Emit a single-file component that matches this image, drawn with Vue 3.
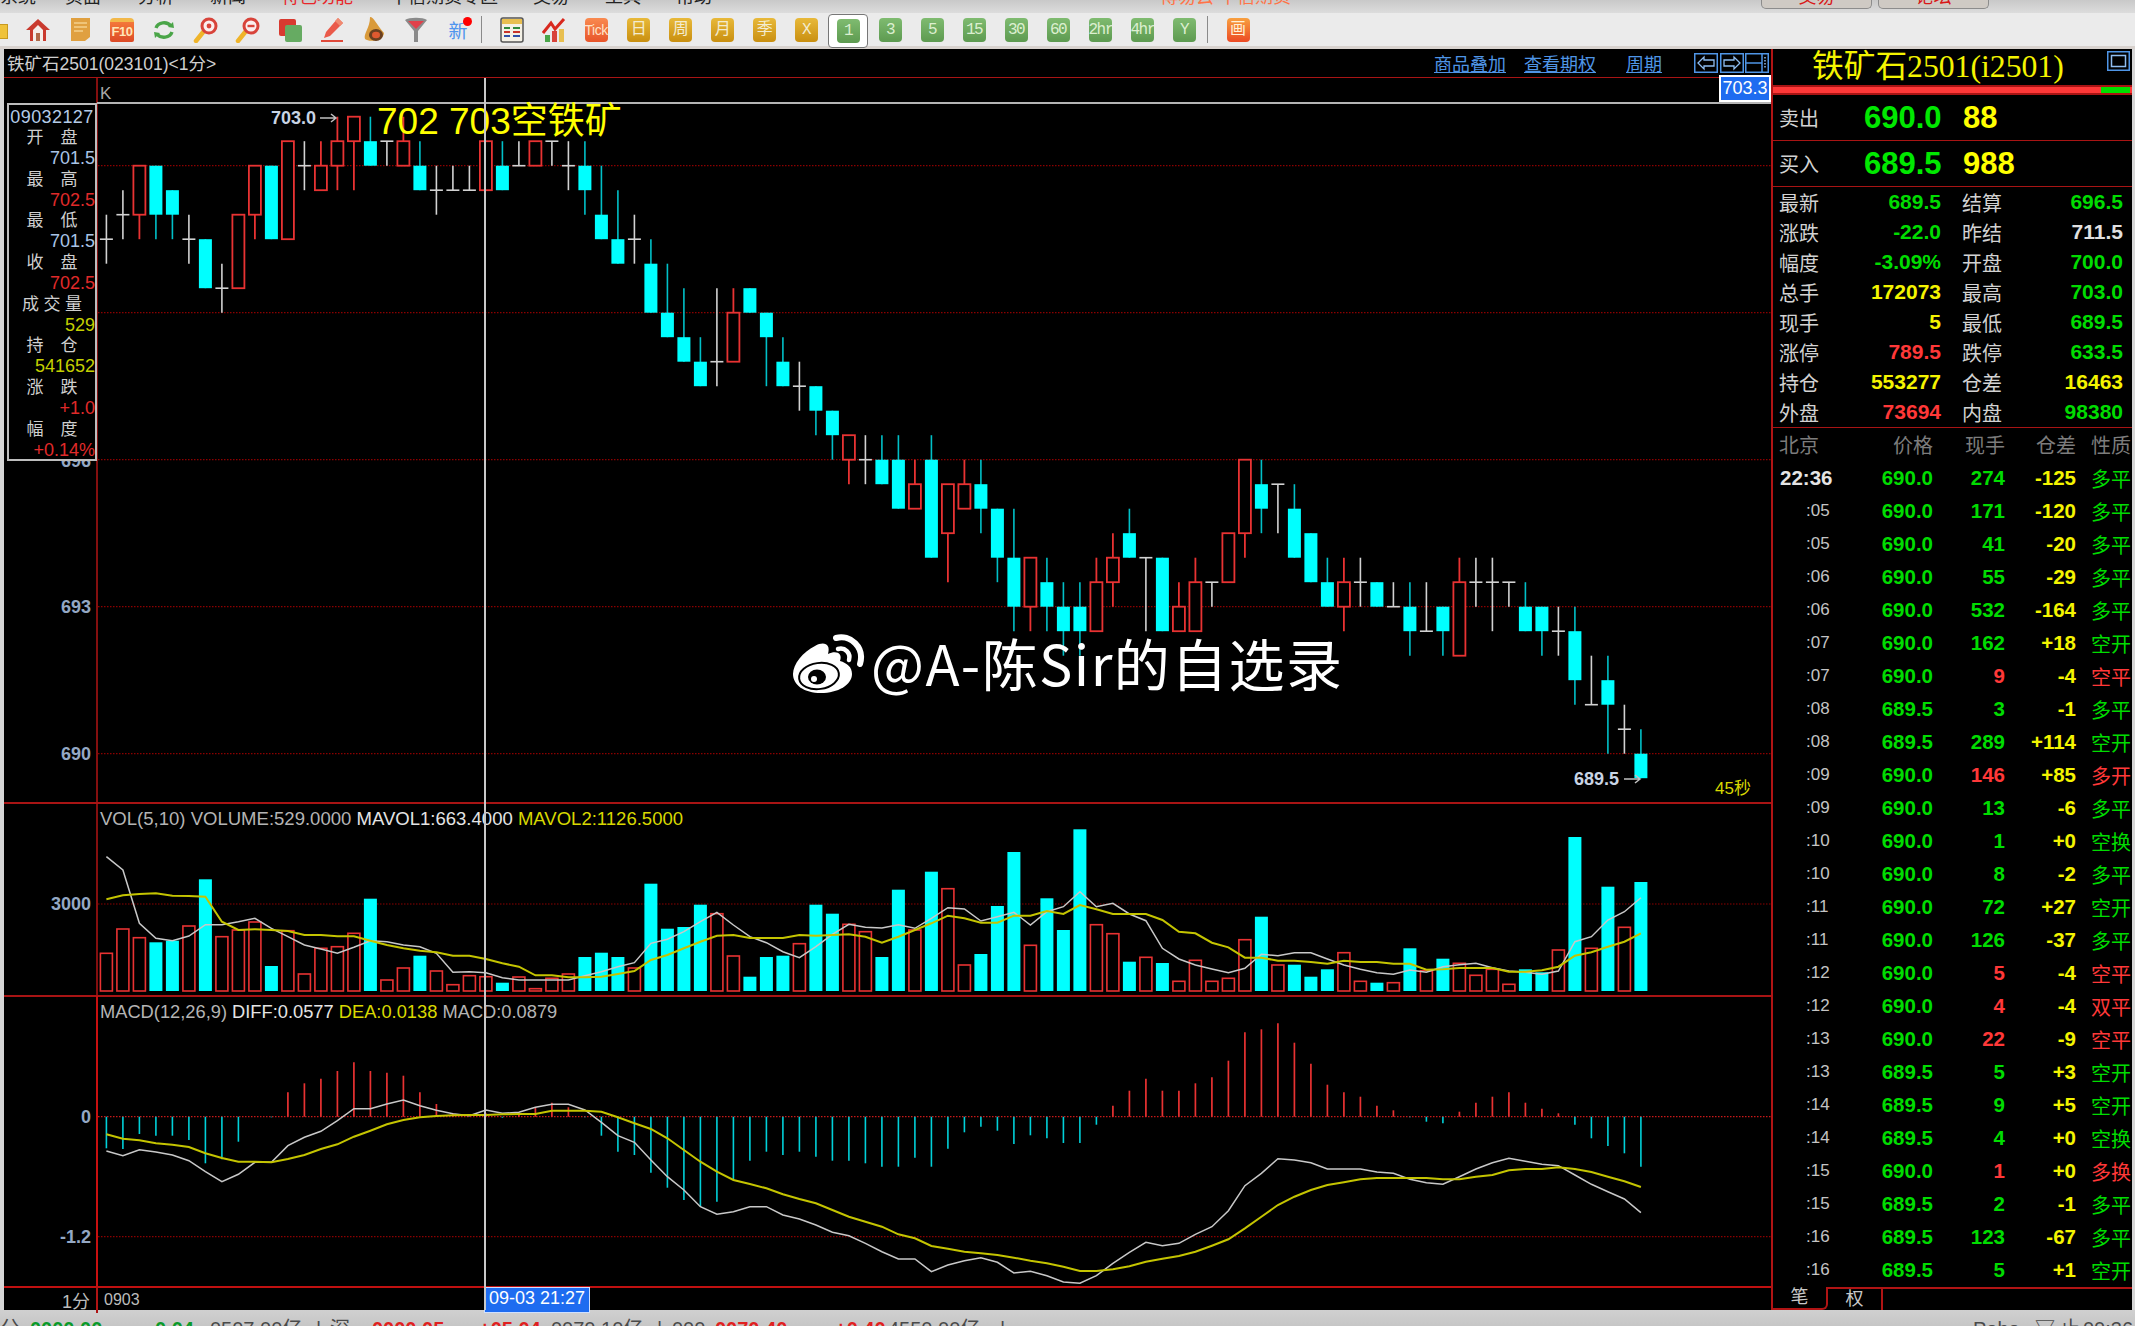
<script setup>
const X0 = 106.4
const STEP = 16.5
const cx = i => +(X0 + STEP * i).toFixed(1)
const py = p => +(753.7 + (690 - p) * 49).toFixed(1)

// type, body top, body bottom, high, low
const raw = [
  ['d',700.5,700.5,701,700],['d',701,701,701.5,700.5],['r',702,701,702,700.5],['c',702,701,702,700.5],
  ['c',701.5,701,701.5,700.5],['d',700.5,700.5,701,700],['c',700.5,699.5,700.5,699.5],['d',699.5,699.5,700,699],
  ['r',701,699.5,701,699.5],['r',702,701,702,700.5],['c',702,700.5,702,700.5],['r',702.5,700.5,702.5,700.5],
  ['d',702,702,702.5,701.5],['r',702,701.5,702.5,701.5],['r',702.5,702,703,701.5],['r',703,702.5,703,701.5],
  ['c',702.5,702,703,702],['d',702.5,702.5,702.5,702],['r',702.5,702,703,702],['c',702,701.5,702.5,701.5],
  ['d',701.5,701.5,702,701],['d',701.5,701.5,702,701.5],['d',701.5,701.5,702,701.5],['r',702.5,701.5,702.5,701.5],
  ['c',702,701.5,702.5,701.5],['d',702,702,702.5,702],['r',702.5,702,702.5,702],['d',702.5,702.5,702.5,702],
  ['d',702,702,702.5,701.5],['c',702,701.5,702.5,701],['c',701,700.5,702,700.5],['c',700.5,700,701.5,700],
  ['d',700.5,700.5,701,700],['c',700,699,700.5,699],['c',699,698.5,700,698.5],['c',698.5,698,699.5,698],
  ['c',698,697.5,698.5,697.5],['d',698,698,699.5,697.5],['r',699,698,699.5,698],['c',699.5,699,699.5,699],
  ['c',699,698.5,699,697.5],['c',698,697.5,698.5,697.5],['d',697.5,697.5,698,697],['c',697.5,697,697.5,696.5],
  ['c',697,696.5,697,696],['r',696.5,696,696.5,695.5],['d',696,696,696.5,695.5],['c',696,695.5,696.5,695.5],
  ['c',696,695,696.5,695],['r',695.5,695,696,695],['c',696,694,696.5,694],['r',695.5,694.5,695.5,693.5],
  ['r',695.5,695,696,695],['c',695.5,695,696,694.5],['c',695,694,695,693.5],['c',694,693,695,692.5],
  ['r',694,693,694,692.5],['c',693.5,693,694,692.5],['c',693,692.5,693.5,692],['c',693,692.5,693.5,692],
  ['r',693.5,692.5,694,692.5],['r',694,693.5,694.5,693],['c',694.5,694,695,694],['d',694,694,694,692.5],
  ['c',694,692.5,694,692.5],['r',693,692.5,693.5,692.5],['r',693.5,692.5,694,692.5],['d',693.5,693.5,693.5,693],
  ['r',694.5,693.5,694.5,693.5],['r',696,694.5,696,694],['c',695.5,695,696,694.5],['d',695.5,695.5,695.5,694.5],
  ['c',695,694,695.5,694],['c',694.5,693.5,694.5,693.5],['c',693.5,693,694,693],['r',693.5,693,694,692.5],
  ['d',693.5,693.5,694,693],['c',693.5,693,693.5,693],['d',693,693,693.5,693],['c',693,692.5,693.5,692],
  ['d',692.5,692.5,693.5,692.5],['c',693,692.5,693,692],['r',693.5,692,694,692],['d',693.5,693.5,694,693],
  ['d',693.5,693.5,694,692.5],['d',693.5,693.5,693.5,693],['c',693,692.5,693.5,692.5],['c',693,692.5,693,692],
  ['d',692.5,692.5,693,692],['c',692.5,691.5,693,691],['d',691,691,692,691],['c',691.5,691,692,690],
  ['d',690.5,690.5,691,690],['c',690,689.5,690.5,689.5]
]
const candles = raw.map((c, i) => ({
  x: cx(i), type: c[0], top: py(c[1]), bottom: py(c[2]), high: py(c[3]), low: py(c[4])
}))

// bar tops, negative = solid cyan bar
const volRaw = [
  490,417,443,-457,-452,408,-268,440,420,396,-528,422,552,475,470,430,-326,570,534,-497,543,584,557,560,
  -578,561,596,565,552,-501,-488,-501,534,-281,-416,-411,-344,371,498,-560,-501,-497,461,-344,-371,403,425,-501,
  -299,420,-245,296,525,-492,-348,-186,466,-325,-420,-118,404,431,-515,502,-519,574,511,574,565,449,-380,525,
  -524,-560,-538,488,574,-578,578,-475,542,-506,520,556,538,583,-538,-547,480,-141,475,-290,412,-276
]
const VOL_BASE = 991
const volY = v => +(790 + v / 3).toFixed(1)
const vols = volRaw.map((v, i) => ({ x: cx(i), y: volY(Math.abs(v)), solid: v < 0 }))

const toPoints = (arr, yFn) => arr.map((v, i) => `${cx(i)},${yFn(v)}`).join(' ')

const mavol1 = toPoints([
  200,240,400,445,452,438,404,404,395,385,415,440,465,477,490,472,452,455,465,470,490,547,545,548,563,570,570,570,570,557,545,530,518,460,448,425,395,367,405,440,458,485,503,470,433,403,412,414,
  404,415,385,353,357,393,380,367,405,365,350,305,350,340,372,392,475,507,525,537,548,535,493,497,488,488,507,525,538,548,553,540,547,530,524,520,533,543,547,553,543,455,440,390,365,323
], volY)
const mavol2 = toPoints([
  328,316,312,310,317,318,320,395,420,418,420,423,435,435,439,439,452,465,475,482,487,497,497,507,520,530,556,556,562,562,560,552,543,510,495,475,455,437,435,444,444,444,435,437,435,433,440,458,
  440,420,400,377,385,398,398,377,377,363,372,345,358,372,372,372,390,425,430,458,472,503,503,512,512,516,521,512,516,516,521,521,539,538,534,534,534,545,545,541,530,497,487,470,455,430
], volY)

const macdY = v => +(1000 + v / 3).toFixed(1)
const histRaw = [
  445,447,402,407,407,420,490,478,425,350,352,277,250,236,213,187,213,218,227,277,312,340,350,340,353,340,322,308,322,352,407,455,465,518,563,600,620,605,540,482,455,465,455,470,482,482,490,500,
  500,473,500,446,397,380,392,432,406,415,429,429,374,317,272,236,272,272,250,232,182,97,88,70,128,191,254,277,290,317,331,352,365,370,335,308,290,277,308,326,340,374,415,438,460,500
]
const hist = histRaw.map((v, i) => ({ x: cx(i), y: macdY(v), up: v < 350 })).filter(h => h.y !== macdY(350))
const diff = toPoints([
  453,467,449,456,465,482,515,545,523,487,487,437,412,394,362,326,326,312,300,317,331,341,347,330,340,337,322,313,313,330,367,407,427,480,530,570,620,643,635,620,620,645,657,675,697,707,730,755,
  777,777,815,795,782,773,787,819,814,827,846,850,827,790,757,727,737,730,703,680,632,557,520,476,480,488,507,507,507,516,520,538,548,553,530,507,488,475,484,493,497,525,553,575,597,638
], macdY)
const dea = toPoints([
  403,416,421,430,434,441,460,474,485,485,487,477,465,447,433,410,392,373,360,352,348,346,345,345,343,342,342,332,332,332,335,352,370,387,415,450,485,515,540,552,565,583,597,610,630,650,665,680,
  703,715,738,746,755,760,765,773,782,790,800,813,813,808,799,785,776,768,755,737,718,685,650,615,590,570,555,547,538,534,534,534,534,538,538,530,525,511,507,507,502,507,516,530,544,561
], macdY)

const menuItems = [
  { t: '系统', w: 65 }, { t: '页面', w: 73 }, { t: '分析', w: 72 }, { t: '新闻', w: 71 },
  { t: '特色功能', w: 109, red: true }, { t: '中信期货专区', w: 143 }, { t: '交易', w: 72 },
  { t: '工具', w: 71 }, { t: '帮助', w: 484 }, { t: '博易云 中信期货', w: 601, orange: true }
]

const goldBtns = ['日', '周', '月', '季', 'X']
const greenBtns = ['1', '3', '5', '15', '30', '60', '2hr', '4hr', 'Y']

const infoRows = [
  { label: '开盘', value: '701.5', cls: 'blue' }, { label: '最高', value: '702.5', cls: 'red' },
  { label: '最低', value: '701.5', cls: 'blue' }, { label: '收盘', value: '702.5', cls: 'red' },
  { label: '成交量', value: '529', cls: 'olive', tight: true }, { label: '持仓', value: '541652', cls: 'olive' },
  { label: '涨跌', value: '+1.0', cls: 'red' }, { label: '幅度', value: '+0.14%', cls: 'red' }
]

const stats = [
  ['最新', '689.5', 'g', '结算', '696.5', 'g'], ['涨跌', '-22.0', 'g', '昨结', '711.5', 'w'],
  ['幅度', '-3.09%', 'g', '开盘', '700.0', 'g'], ['总手', '172073', 'y', '最高', '703.0', 'g'],
  ['现手', '5', 'y', '最低', '689.5', 'g'], ['涨停', '789.5', 'r', '跌停', '633.5', 'g'],
  ['持仓', '553277', 'y', '仓差', '16463', 'y'], ['外盘', '73694', 'r', '内盘', '98380', 'g']
]

const ticks = [
  ['22:36','690.0','274','-125','多平','g'],[':05','690.0','171','-120','多平','g'],[':05','690.0','41','-20','多平','g'],
  [':06','690.0','55','-29','多平','g'],[':06','690.0','532','-164','多平','g'],[':07','690.0','162','+18','空开','g'],
  [':07','690.0','9','-4','空平','r'],[':08','689.5','3','-1','多平','g'],[':08','689.5','289','+114','空开','g'],
  [':09','690.0','146','+85','多开','r'],[':09','690.0','13','-6','多平','g'],[':10','690.0','1','+0','空换','g'],
  [':10','690.0','8','-2','多平','g'],[':11','690.0','72','+27','空开','g'],[':11','690.0','126','-37','多平','g'],
  [':12','690.0','5','-4','空平','r'],[':12','690.0','4','-4','双平','r'],[':13','690.0','22','-9','空平','r'],
  [':13','689.5','5','+3','空开','g'],[':14','689.5','9','+5','空开','g'],[':14','689.5','4','+0','空换','g'],
  [':15','690.0','1','+0','多换','r'],[':15','689.5','2','-1','多平','g'],[':16','689.5','123','-67','多平','g'],
  [':16','689.5','5','+1','空开','g']
]

const statusItems = [
  { t: '分', w: 30, c: 'k' }, { t: '0000.00', w: 125, c: 'g' }, { t: '0.04', w: 55, c: 'g' }, { t: '0507.00亿', w: 106, c: 'k' },
  { t: '|', w: 14, c: 'k' }, { t: '深', w: 42, c: 'k' }, { t: '0000.05', w: 107, c: 'r' }, { t: '+05.04', w: 72, c: 'r' },
  { t: '0070.10亿', w: 106, c: 'k' }, { t: '|', w: 15, c: 'k' }, { t: '000', w: 43, c: 'k' }, { t: '0070.40', w: 120, c: 'r' },
  { t: '+0.40', w: 53, c: 'r' }, { t: '4550.00亿', w: 112, c: 'k' }, { t: '|', w: 973, c: 'k' },
  { t: 'Pobo', w: 62, c: 'k' }, { t: '▽', w: 25, c: 'k' }, { t: '止', w: 23, c: 'k' }, { t: '00:36', w: 50, c: 'k' }
]
</script>

<template>
  <div class="app">
    <div class="menubar">
      <span v-for="m in menuItems" :key="m.t" :class="{ red: m.red, orange: m.orange }" :style="{ width: m.w + 'px' }">{{ m.t }}</span>
      <span class="topbtn"><b>交易</b></span>
      <span class="topbtn"><b>论坛</b></span>
    </div>

    <div class="toolbar">
      <div class="slot lead"><i class="folder"></i></div>
      <div class="slot">
        <svg width="26" height="26" viewBox="0 0 26 26"><path d="M13 2 L25 13 L21 13 L21 24 L5 24 L5 13 L1 13 Z" fill="#c93a2e"/><path d="M8 13 L13 8 L18 13 L18 24 L8 24 Z" fill="#f4eeea"/><rect x="11" y="16" width="4" height="8" fill="#b06a4a"/></svg>
      </div>
      <div class="slot">
        <svg width="23" height="25" viewBox="0 0 23 25"><path d="M2 1 H21 V20 L16 24 H2 Z" fill="#e0a040"/><path d="M5 6 H18 M5 10 H18 M5 14 H14" stroke="#f3d08a" stroke-width="1.5"/></svg>
      </div>
      <div class="slot">
        <div class="icon-f10">F10</div>
      </div>
      <div class="slot">
        <svg width="24" height="24" viewBox="0 0 24 24" fill="none" stroke="#4aa548" stroke-width="3.4"><path d="M4 10 C6 4 15 3 19 8"/><path d="M20 14 C18 20 9 21 5 16"/><path d="M16 9 L22 10 L21 4" fill="#4aa548" stroke="none"/><path d="M8 15 L2 14 L3 20" fill="#4aa548" stroke="none"/></svg>
      </div>
      <div class="slot">
        <svg width="26" height="26" viewBox="0 0 26 26" fill="none"><path d="M11 14 L3 24" stroke="#efb42a" stroke-width="4.5" stroke-linecap="round"/><circle cx="16" cy="9" r="7" stroke="#d8433a" stroke-width="3" fill="#fbeeee"/><circle cx="16" cy="9" r="2.4" fill="#d8433a"/></svg>
      </div>
      <div class="slot">
        <svg width="26" height="26" viewBox="0 0 26 26" fill="none"><path d="M11 14 L3 24" stroke="#efb42a" stroke-width="4.5" stroke-linecap="round"/><circle cx="16" cy="9" r="7" stroke="#d8433a" stroke-width="3" fill="#fbeeee"/><path d="M12.5 9 H19.5" stroke="#d8433a" stroke-width="2.4"/></svg>
      </div>
      <div class="slot">
        <svg width="26" height="26" viewBox="0 0 26 26"><rect x="2" y="2" width="17" height="17" rx="2" fill="#d83a30"/><rect x="8" y="8" width="17" height="17" rx="2" fill="#66ab62"/></svg>
      </div>
      <div class="slot">
        <svg width="24" height="26" viewBox="0 0 24 26"><path d="M18 1 L23 6 L10 19 L4 21 L6 15 Z" fill="#ea5a4a"/><path d="M18 1 L23 6 L20 9 L15 4 Z" fill="#f08a70"/><rect x="1" y="23" width="22" height="2" fill="#e04a3a"/></svg>
      </div>
      <div class="slot">
        <svg width="24" height="27" viewBox="0 0 24 27"><path d="M8 1 C12 1 14 8 22 17 C22 24 8 27 3 23 C1 18 8 12 8 1 Z" fill="#d99a3a"/><ellipse cx="14" cy="19" rx="7" ry="6" fill="#6a4020"/><ellipse cx="14" cy="19" rx="4" ry="3.2" fill="#e05a30"/></svg>
      </div>
      <div class="slot">
        <svg width="24" height="26" viewBox="0 0 24 26"><path d="M1 3 C5 0 19 0 23 3 L14 14 L14 25 L10 25 L10 14 Z" fill="#8a8a8a"/><path d="M4 4 H20 L12 12 Z" fill="#e0404a"/></svg>
      </div>
      <div class="slot newmark">新<i></i></div>
      <div class="sep"></div>

      <div class="slot">
        <svg width="24" height="26" viewBox="0 0 24 26"><rect x="1" y="1" width="22" height="24" rx="2" fill="#f4f1e6" stroke="#555" stroke-width="1.5"/><rect x="2" y="2" width="20" height="5" fill="#e8bf50"/><path d="M4 11 H10 M13 11 H20" stroke="#2f8a3c" stroke-width="2"/><path d="M4 15 H10 M13 15 H20" stroke="#c8342a" stroke-width="2"/><path d="M4 19 H10 M13 19 H20" stroke="#2f4fa8" stroke-width="2"/></svg>
      </div>
      <div class="slot">
        <svg width="24" height="26" viewBox="0 0 24 26"><rect x="3" y="18" width="5" height="7" fill="#4aa548"/><rect x="10" y="14" width="5" height="11" fill="#d8433a"/><rect x="17" y="12" width="5" height="13" fill="#e8bf50"/><path d="M1 16 L9 6 L13 12 L22 2" fill="none" stroke="#d8281e" stroke-width="3"/></svg>
      </div>
      <div class="slot"><div class="btn tick">Tick</div></div>
      <div v-for="b in goldBtns" :key="b" class="slot"><div class="btn gold">{{ b }}</div></div>
      <div v-for="(b, i) in greenBtns" :key="b" class="slot" :class="{ selected: i === 0 }"><div class="btn green">{{ b }}</div></div>
      <div class="sep"></div>
      <div class="slot"><div class="btn hot">画</div></div>
    </div>

    <div class="main">
      <div class="chart">
        <div class="title-row">
          <span class="title">铁矿石2501(023101)&lt;1分&gt;</span>
          <a class="link first">商品叠加</a>
          <a class="link mid">查看期权</a>
          <a class="link last">周期</a>
          <div class="nav-btns">
            <svg width="24" height="20" viewBox="0 0 24 20"><rect x=".75" y=".75" width="22.5" height="18.5" fill="none" stroke="#4f95e6" stroke-width="1.5"/><path d="M4 10 L10 4 V7 H20 V13 H10 V16 Z" fill="none" stroke="#8fbdf0" stroke-width="1.3"/></svg>
            <svg width="24" height="20" viewBox="0 0 24 20"><rect x=".75" y=".75" width="22.5" height="18.5" fill="none" stroke="#4f95e6" stroke-width="1.5"/><path d="M20 10 L14 4 V7 H4 V13 H14 V16 Z" fill="none" stroke="#8fbdf0" stroke-width="1.3"/></svg>
            <svg width="24" height="20" viewBox="0 0 24 20"><rect x=".75" y=".75" width="22.5" height="18.5" fill="none" stroke="#4f95e6" stroke-width="1.5"/><path d="M1 10 H17 M17 1 V19" stroke="#4f95e6" stroke-width="1.5"/><path d="M20 4 V16" stroke="#8fbdf0" stroke-width="1.5" stroke-dasharray="1.5 1.5"/></svg>
          </div>
        </div>

        <div class="pane kline">
          <svg width="1767" height="725" viewBox="4 78 1767 725">
            <line class="axis-line" x1="97" y1="78" x2="97" y2="803"/>
            <line class="topline" x1="97" y1="103" x2="1771" y2="103"/>
            <line v-for="y in [165.7, 312.7, 459.7, 606.7, 753.7]" :key="y" class="grid" x1="98" :y1="y" x2="1771" :y2="y"/>
            <text class="k-label" x="100" y="99">K</text>
            <text class="axis-txt" x="91" y="467">696</text>
            <text class="axis-txt" x="91" y="613">693</text>
            <text class="axis-txt" x="91" y="760">690</text>
            <g v-for="(c, i) in candles" :key="i">
              <template v-if="c.type === 'd'">
                <line class="wick-w" :x1="c.x" :y1="c.high" :x2="c.x" :y2="c.low"/>
                <line class="wick-w" :x1="c.x - 6.5" :y1="c.top" :x2="c.x + 6.5" :y2="c.top"/>
              </template>
              <template v-else-if="c.type === 'r'">
                <line class="wick-r" :x1="c.x" :y1="c.high" :x2="c.x" :y2="c.top"/>
                <line class="wick-r" :x1="c.x" :y1="c.bottom" :x2="c.x" :y2="c.low"/>
                <rect class="body-r" :x="c.x - 6" :y="c.top" width="12" :height="c.bottom - c.top"/>
              </template>
              <template v-else>
                <line class="wick-c" :x1="c.x" :y1="c.high" :x2="c.x" :y2="c.low"/>
                <rect class="body-c" :x="c.x - 6.5" :y="c.top" width="13" :height="c.bottom - c.top"/>
              </template>
            </g>
            <text class="mark" x="271" y="124">703.0</text>
            <path class="mark-arrow" d="M320 118 H336 M331 114 L336 118 L331 122"/>
            <text class="note" x="377" y="134">702 703空铁矿</text>
            <text class="mark" x="1574" y="785">689.5</text>
            <path class="mark-arrow" d="M1624 779 H1640 M1635 775 L1640 779 L1635 783"/>
            <text class="secs" x="1715" y="794">45秒</text>
          </svg>
          <div class="price-tag">703.3</div>
        </div>

        <div class="pane vol">
          <svg width="1767" height="193" viewBox="4 803 1767 193">
            <line class="axis-line" x1="97" y1="803" x2="97" y2="996"/>
            <line class="grid" x1="98" y1="904" x2="1771" y2="904"/>
            <text class="axis-txt" x="91" y="910">3000</text>
            <text class="ind vol-ind" x="100" y="825">VOL(5,10) VOLUME:529.0000 <tspan class="white">MAVOL1:663.4000</tspan> <tspan class="yellow">MAVOL2:1126.5000</tspan></text>
            <template v-for="(v, i) in vols" :key="i">
              <rect v-if="v.solid" class="body-c" :x="v.x - 6.5" :y="v.y" width="13" :height="VOL_BASE - v.y"/>
              <rect v-else class="body-v" :x="v.x - 6" :y="v.y" width="12" :height="VOL_BASE - v.y"/>
            </template>
            <polyline class="line-w" :points="mavol1"/>
            <polyline class="line-y" :points="mavol2"/>
          </svg>
        </div>

        <div class="pane macd">
          <svg width="1767" height="291" viewBox="4 996 1767 291">
            <line class="axis-line bright" x1="97" y1="996" x2="97" y2="1287"/>
            <line class="grid zero" x1="98" y1="1116.7" x2="1771" y2="1116.7"/>
            <line class="grid" x1="98" y1="1236.7" x2="1771" y2="1236.7"/>
            <text class="axis-txt" x="91" y="1123">0</text>
            <text class="axis-txt" x="91" y="1243">-1.2</text>
            <text class="ind" x="100" y="1018">MACD(12,26,9) <tspan class="white">DIFF:0.0577</tspan> <tspan class="yellow">DEA:0.0138</tspan> MACD:0.0879</text>
            <line v-for="(h, i) in hist" :key="i" :class="h.up ? 'hist-r' : 'hist-c'" :x1="h.x" y1="1116.7" :x2="h.x" :y2="h.y"/>
            <polyline class="line-w" :points="diff"/>
            <polyline class="line-y" :points="dea"/>
          </svg>
        </div>

        <div class="axis-row">
          <span class="period">1分</span>
          <span class="date">0903</span>
          <span class="cursor-date">09-03 21:27</span>
        </div>

        <div class="crosshair"></div>

        <div class="info-box">
          <div class="stamp">09032127</div>
          <div v-for="r in infoRows" :key="r.label" class="info-pair">
            <div class="info-label" :class="{ tight: r.tight }">{{ r.label }}</div>
            <div class="info-value" :class="r.cls">{{ r.value }}</div>
          </div>
        </div>
      </div>

      <div class="side">
        <div class="sym-head">
          <span class="sym">铁矿石2501(i2501)</span>
          <svg class="winbtn" width="23" height="20" viewBox="0 0 23 20"><rect x=".75" y=".75" width="21.5" height="18.5" fill="none" stroke="#4f95e6" stroke-width="1.5"/><rect x="4.5" y="4.5" width="14" height="11" fill="none" stroke="#8fbdf0" stroke-width="1.5"/></svg>
        </div>
        <div class="ratio"><i></i></div>
        <div class="quote">
          <span class="q-label">卖出</span>
          <span class="q-price">690.0</span>
          <span class="q-vol">88</span>
        </div>
        <div class="quote">
          <span class="q-label">买入</span>
          <span class="q-price">689.5</span>
          <span class="q-vol">988</span>
        </div>
        <div class="stats">
          <template v-for="s in stats" :key="s[0]">
            <div class="stat"><span>{{ s[0] }}</span><b :class="s[2]">{{ s[1] }}</b></div>
            <div class="stat"><span>{{ s[3] }}</span><b :class="s[5]">{{ s[4] }}</b></div>
          </template>
        </div>
        <div class="tick-head">
          <span>北京</span><span>价格</span><span>现手</span><span>仓差</span><span>性质</span>
        </div>
        <div class="ticks">
          <div v-for="(t, i) in ticks" :key="i" class="tick-row">
            <span class="time" :class="{ full: i === 0 }">{{ t[0] }}</span>
            <b class="g">{{ t[1] }}</b>
            <b :class="t[5]">{{ t[2] }}</b>
            <b class="y">{{ t[3] }}</b>
            <span class="nature" :class="t[5]">{{ t[4] }}</span>
          </div>
        </div>
        <div class="tabs">
          <span class="tab active">笔</span>
          <span class="tab">权</span>
          <span class="tab-rest"></span>
        </div>
      </div>
    </div>

    <div class="statusbar">
      <span v-for="(s, i) in statusItems" :key="i" :class="s.c" :style="{ width: s.w + 'px' }">{{ s.t }}</span>
    </div>

    <div class="watermark">
      <svg width="74" height="62" viewBox="0 0 74 62">
        <path d="M30 60 C13 60 2 52 2 41 C2 31 12 19 24 13 C33 8 40 11 37 21 C45 17 52 20 49 28 C56 30 61 34 61 41 C61 52 47 60 30 60 Z" fill="#fff"/>
        <ellipse cx="28" cy="43" rx="20" ry="13" fill="none" stroke="#000" stroke-width="2" transform="rotate(-8 28 43)"/>
        <ellipse cx="26" cy="44" rx="9" ry="7.5" fill="#000"/>
        <circle cx="23" cy="46" r="3" fill="#fff"/>
        <path d="M45 5 C59 1 74 14 69 31" fill="none" stroke="#fff" stroke-width="6" stroke-linecap="round"/>
        <path d="M47 16 C54 14 60 20 58 27" fill="none" stroke="#fff" stroke-width="4.5" stroke-linecap="round"/>
      </svg>
      <span class="wm-text">@A-陈Sir的自选录</span>
    </div>
  </div>
</template>

<style>
html, body {
  background: #d6d6d6;
  overflow: hidden;
}
</style>

<style scoped>
.app {
  position: relative;
  width: 2135px;
  height: 1326px;
  overflow: hidden;
  display: flex;
  flex-direction: column;
  background: #d6d6d6;
  font-family: "Liberation Sans", "Noto Sans CJK SC", sans-serif;
}

/* menu */
.menubar {
  height: 13px;
  display: flex;
  overflow: hidden;
  background: linear-gradient(#c9c9c9, #dcdcdc);
  color: #222;
  font-size: 18px;
  line-height: 18px;
}
.menubar > span {
  flex: none;
  margin-top: -12px;
  height: 18px;
}
.menubar .red { color: #e8262a; }
.menubar .orange { color: #ff7448; }
.menubar .topbtn {
  margin-top: 0;
  width: 109px;
  height: 8px;
  margin-right: 6px;
  background: #cfcac4;
  border: 1px solid #8c8c8c;
  border-top: none;
  border-radius: 0 0 5px 5px;
  text-align: center;
  overflow: hidden;
}
.topbtn b {
  display: block;
  margin-top: -12px;
  color: #d81818;
  font-weight: 400;
}

/* toolbar */
.toolbar {
  height: 33px;
  display: flex;
  align-items: center;
  background: #ebebeb;
  border-bottom: 3px solid #d8d2ce;
  padding-left: 17px;
  position: relative;
}
.slot {
  flex: none;
  width: 42px;
  height: 30px;
  display: flex;
  align-items: center;
  justify-content: center;
  position: relative;
}
.slot.lead {
  position: absolute;
  left: -8px;
  top: 3px;
  width: 16px;
}
.folder {
  width: 16px;
  height: 13px;
  background: #efc23a;
  border: 1px solid #c89a20;
}
.sep {
  flex: none;
  width: 12px;
  height: 27px;
  position: relative;
}
.sep::after {
  content: "";
  position: absolute;
  left: 2px;
  top: 0;
  bottom: 0;
  width: 1px;
  background: #8a8a8a;
}
.icon-f10 {
  width: 24px;
  height: 24px;
  box-sizing: border-box;
  border-radius: 4px 4px 2px 2px;
  border-top: 4px solid #f2b84a;
  background: linear-gradient(#f4773a, #dc4a26);
  color: #ffe6b8;
  font-size: 13px;
  font-weight: 700;
  line-height: 20px;
  text-align: center;
  letter-spacing: -.5px;
}
.newmark {
  color: #4f95ee;
  font-size: 19px;
}
.newmark i {
  position: absolute;
  right: 7px;
  top: 2px;
  width: 9px;
  height: 9px;
  border-radius: 50%;
  background: #f00;
}
.btn {
  width: 23px;
  height: 24px;
  border-radius: 4px;
  color: #f3ecd0;
  font: 16px/24px "Liberation Mono", "Noto Sans CJK SC", monospace;
  text-align: center;
  white-space: nowrap;
  overflow: hidden;
  letter-spacing: -1.5px;
}
.btn.gold { background: linear-gradient(#e8b93a, #c98f10); }
.btn.green { background: linear-gradient(#7fbb70, #5d9a50); color: #dcefd0; }
.btn.tick {
  background: linear-gradient(#f98a50, #e8552a);
  color: #ffe2c8;
  font: 14px/24px "Liberation Sans", sans-serif;
  letter-spacing: -.5px;
}
.btn.hot {
  background: linear-gradient(#f8a040, #ec4a24);
  color: #fff0d8;
  letter-spacing: 0;
}
.slot.selected::before {
  content: "";
  position: absolute;
  left: 1px;
  right: 1px;
  top: -1px;
  bottom: -3px;
  background: #fff;
  border: 1.5px solid #777;
  border-radius: 4px;
}
.slot.selected .btn {
  position: relative;
  margin-top: 3px;
}

/* main */
.main {
  flex: 1;
  min-height: 0;
  display: flex;
  margin: 0 3px 0 4px;
  background: #000;
}
.chart {
  position: relative;
  width: 1767px;
  flex: none;
  display: flex;
  flex-direction: column;
}
.title-row {
  height: 28px;
  flex: none;
  display: flex;
  align-items: center;
  box-sizing: content-box;
  border-bottom: 1px solid #a81414;
  font-size: 18px;
}
.title {
  margin-left: 3px;
  margin-top: -2px;
  color: #cfcfcf;
  font-size: 17.5px;
}
.link {
  color: #4f95e6;
  text-decoration: underline;
  font-size: 18px;
}
.link.first { margin-left: auto; }
.link.mid { margin-left: 18px; }
.link.last { margin-left: 30px; }
.nav-btns {
  display: flex;
  gap: 1.5px;
  margin: 0 2px 0 32px;
}
.pane {
  position: relative;
  flex: none;
}
.pane svg { display: block; }
.pane.kline { height: 725px; }
.pane.vol { height: 193px; }
.pane.macd { height: 291px; }
.pane::after {
  content: "";
  position: absolute;
  left: 0;
  right: 0;
  bottom: -1px;
  height: 2px;
  background: #a81414;
}
.pane.macd::after { background: #c01010; }
.price-tag {
  position: absolute;
  right: 0;
  top: -3px;
  width: 52px;
  height: 27px;
  box-sizing: border-box;
  border: 2px solid #fff;
  background: #1e6cf0;
  color: #fff;
  font-size: 18px;
  line-height: 23px;
  text-align: center;
}

.axis-line {
  stroke: #b01414;
  stroke-width: 1.5;
}
.axis-line.bright { stroke: #c81010; stroke-width: 2; }
.topline {
  stroke: #b4b4b4;
  stroke-width: 2;
}
.grid {
  stroke: #8c0000;
  stroke-width: 1.2;
  stroke-dasharray: 1.5 1.5;
}
.grid.zero { stroke: #c81818; }
.k-label {
  fill: #a8a8a8;
  font-size: 17px;
}
.axis-txt {
  fill: #94a8c4;
  font-size: 18px;
  font-weight: 700;
  text-anchor: end;
}
.wick-w { stroke: #d2d2d2; stroke-width: 1.6; }
.wick-r { stroke: #e83232; stroke-width: 1.8; }
.wick-c { stroke: #00c0c8; stroke-width: 1.6; }
.body-r { fill: #000; stroke: #e83232; stroke-width: 1.8; }
.body-v { fill: #000; stroke: #e83232; stroke-width: 1.6; }
.body-c { fill: #00ffff; }
.mark {
  fill: #c8d4e4;
  font-size: 18px;
  font-weight: 700;
}
.mark-arrow {
  fill: none;
  stroke: #c0c0c0;
  stroke-width: 1.5;
}
.note {
  fill: #ffff00;
  font-size: 37px;
}
.secs {
  fill: #d8d800;
  font-size: 17px;
}
.ind {
  fill: #b4b4b4;
  font-size: 18.3px;
}
.ind.vol-ind { font-size: 18.55px; }
.ind .white { fill: #e4e4e4; }
.ind .yellow { fill: #d8d800; }
.line-w {
  fill: none;
  stroke: #c8c8c8;
  stroke-width: 1.5;
}
.line-y {
  fill: none;
  stroke: #c4c400;
  stroke-width: 2;
}
.hist-r { stroke: #e83232; stroke-width: 1.7; }
.hist-c { stroke: #00d0d8; stroke-width: 1.6; }

.axis-row {
  flex: 1;
  display: flex;
  align-items: center;
  position: relative;
  color: #bcbcbc;
  font-size: 17px;
}
.period {
  width: 86px;
  text-align: right;
  font-size: 18px;
}
.date {
  margin-left: 14px;
  font-size: 16px;
}
.cursor-date {
  position: absolute;
  left: 480px;
  top: 0;
  bottom: 0;
  width: 106px;
  background: #1e6cf0;
  border: 1px solid #cfe0ff;
  box-sizing: border-box;
  color: #fff;
  font-size: 18px;
  line-height: 21px;
  text-align: center;
  white-space: nowrap;
}
.axis-row::after {
  content: "";
  position: absolute;
  left: 92px;
  top: 0;
  bottom: 0;
  width: 1.5px;
  background: #b01414;
}
.crosshair {
  position: absolute;
  left: 480px;
  top: 29px;
  bottom: 0;
  width: 1.5px;
  background: #c8c8c8;
}

.info-box {
  position: absolute;
  left: 3px;
  top: 54px;
  width: 90px;
  height: 358px;
  box-sizing: border-box;
  border: 2px solid #bdbdbd;
  background: #000;
  padding: 2px 0 0;
  font-size: 18px;
}
.stamp {
  color: #b4cbe8;
  line-height: 21px;
  text-align: center;
  white-space: nowrap;
  font-size: 18px;
  letter-spacing: .4px;
}
.info-pair {
  height: 41.7px;
}
.info-label {
  color: #cfcfcf;
  text-align: center;
  letter-spacing: 17px;
  padding-left: 17px;
  line-height: 20px;
  font-size: 17px;
}
.info-label.tight {
  letter-spacing: 4.5px;
  padding-left: 4.5px;
}
.info-value {
  text-align: right;
  padding-right: 0;
  line-height: 21px;
}
.info-value.blue { color: #a9c4e6; }
.info-value.red { color: #e02a2a; }
.info-value.olive { color: #c4d000; }

/* side panel */
.side {
  flex: 1;
  min-width: 0;
  display: flex;
  flex-direction: column;
  border-left: 2px solid #b01414;
  color: #d2d2d2;
}
.sym-head {
  height: 36px;
  flex: none;
  position: relative;
  display: flex;
  align-items: center;
}
.sym {
  margin-left: 39px;
  color: #f4f400;
  font: 31.7px/36px "Liberation Serif", "Noto Sans CJK SC", serif;
  white-space: nowrap;
}
.winbtn {
  position: absolute;
  right: 2px;
  top: 2px;
}
.ratio {
  height: 10px;
  flex: none;
  box-sizing: border-box;
  border-top: 2px solid #a81414;
  border-bottom: 2px solid #a81414;
  background: #ff3838;
  position: relative;
}
.ratio i {
  position: absolute;
  right: 2px;
  top: 0;
  bottom: 0;
  width: 29px;
  background: #00e000;
}
.quote {
  height: 45px;
  flex: none;
  display: flex;
  align-items: center;
  padding-left: 6px;
  border-bottom: 1.5px solid #a81414;
}
.q-label {
  font-size: 20px;
  width: 85px;
}
.q-price {
  width: 77px;
  text-align: right;
  color: #00e800;
  font-size: 31px;
  font-weight: 700;
}
.q-vol {
  margin-left: 22px;
  color: #ffff00;
  font-size: 31px;
  font-weight: 700;
}
.stats {
  flex: none;
  display: grid;
  grid-template-columns: 162px 161px;
  column-gap: 21px;
  padding-left: 6px;
  border-bottom: 1.5px solid #a81414;
}
.stat {
  height: 30px;
  display: flex;
  align-items: center;
  justify-content: space-between;
  font-size: 20px;
}
.stat b { font-size: 21px; font-weight: 700; }
.g { color: #00dc00; }
.r { color: #ff3838; }
.y { color: #f4f400; }
.w { color: #e0e0e0; }
.tick-head {
  height: 33.5px;
  flex: none;
  display: grid;
  grid-template-columns: 60px 94px 72px 71px 55px;
  align-items: center;
  padding-left: 6px;
  color: #7c7c7c;
  font-size: 20px;
  text-align: right;
}
.tick-head span:first-child { text-align: left; }
.ticks {
  flex: none;
}
.tick-row {
  height: 33px;
  display: grid;
  grid-template-columns: 60px 94px 72px 71px 55px;
  align-items: center;
  padding-left: 6px;
  text-align: right;
  font-size: 20.5px;
}
.time {
  text-align: left;
  padding-left: 27px;
  color: #c4c4c4;
  font-size: 17px;
}
.time.full {
  padding-left: 1px;
  color: #e4e4e4;
  font-size: 20.5px;
  font-weight: 700;
}
.nature { font-size: 20px; white-space: nowrap; }
.tabs {
  flex: 1;
  min-height: 0;
  display: flex;
  align-items: stretch;
  border-top: 2px solid #b01414;
  font-size: 18px;
}
.tab {
  width: 53px;
  text-align: center;
  color: #c8c8c8;
  line-height: 21px;
  border-right: 2px solid #b01414;
}
.tab.active {
  margin-top: -2px;
  background: #000;
  border-bottom: 2px solid #b01414;
  border-radius: 0 0 6px 0;
}
.tab-rest { flex: 1; }

/* status */
.statusbar {
  height: 16px;
  flex: none;
  display: flex;
  overflow: hidden;
  background: linear-gradient(#d0d0d0, #c6c6c6);
  font-size: 20px;
  line-height: 20px;
  font-weight: 700;
}
.statusbar span {
  flex: none;
  margin-top: 9px;
  white-space: nowrap;
}
.statusbar .k { color: #4a4a4a; font-weight: 400; }
.statusbar .g { color: #0a9a2a; }
.statusbar .r { color: #e02020; }

/* watermark */
.watermark {
  position: absolute;
  left: 791px;
  top: 633px;
  display: flex;
  align-items: center;
  gap: 6px;
  color: #fff;
  font-size: 56px;
  line-height: 62px;
  white-space: nowrap;
  font-family: "Noto Sans CJK SC", sans-serif;
  font-weight: 400;
}
.wm-text {
  margin-top: -5px;
  letter-spacing: 1.4px;
}
</style>
